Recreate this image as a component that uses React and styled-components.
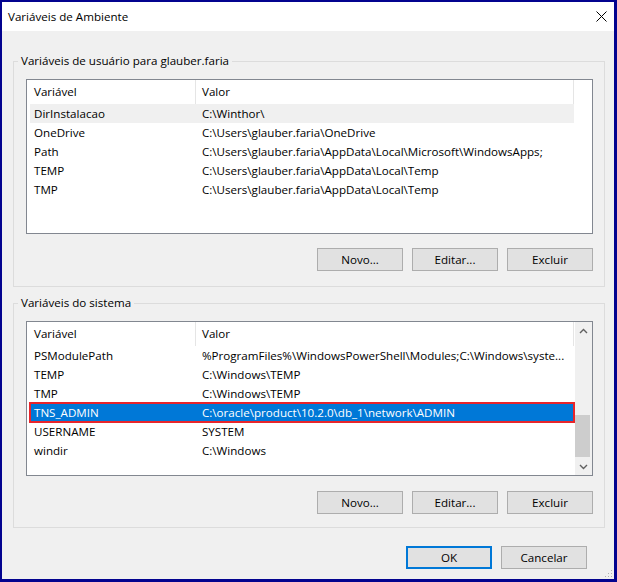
import React from 'react'
import styled, { createGlobalStyle } from 'styled-components'

const Global = createGlobalStyle`
  html, body {
    margin: 0;
    padding: 0;
    background: #f0f0f0;
  }
  * {
    box-sizing: border-box;
  }
`

const FONT = `"Segoe UI", "Open Sans", "Noto Sans", sans-serif`
const SIZE = '11.6px'

const Window = styled.div`
  position: relative;
  width: 617px;
  height: 582px;
  border-style: solid;
  border-color: #03038f;
  border-width: 2px 3px 3px 2px;
  background: #f0f0f0;
  font-family: ${FONT};
  font-size: ${SIZE};
  color: #000;
  display: flex;
  flex-direction: column;
`

const TitleBar = styled.div`
  height: 29px;
  flex: none;
  background: #fff;
  display: flex;
  align-items: center;
  justify-content: space-between;
  padding: 0 7px 0 6px;
`

const Title = styled.span`
  line-height: 16px;
`

const Body = styled.div`
  flex: 1;
  display: flex;
  flex-direction: column;
  padding: 22px 9px 0 11px;
`

const Group = styled.fieldset`
  margin: ${p => p.$first ? '0' : '8px'} 0 0 0;
  padding: 0 11px ${p => p.$pb}px 12px;
  border: 1px solid #dcdcdc;
  min-width: 0;
`

const Legend = styled.legend`
  padding: 0 3px;
  margin-left: -8px;
  line-height: 16px;
`

const List = styled.div`
  margin-top: 10px;
  height: 155px;
  border: 1px solid #828790;
  background: #fff;
  display: flex;
  overflow: hidden;
`

const ListMain = styled.div`
  flex: 1;
  min-width: 0;
`

const Header = styled.div`
  display: flex;
  height: 24px;
  width: 547px;
`

const HeadCell = styled.div`
  width: ${p => p.$w}px;
  padding-left: ${p => p.$pl}px;
  display: flex;
  align-items: center;
  border-right: 1px solid #e5e5e5;
  line-height: 16px;
`

const Row = styled.div`
  display: flex;
  height: 19px;
  width: 544px;
  margin-left: 3px;
  align-items: center;
  background: ${p => p.$state === 'active' ? '#0078d7' : p.$state === 'inactive' ? '#f0f0f0' : 'transparent'};
  color: ${p => p.$state === 'active' ? '#fff' : '#000'};
  outline: ${p => p.$mark ? '2px solid #e8252b' : 'none'};
  outline-offset: -1px;
  white-space: nowrap;
`

const Cell = styled.div`
  width: ${p => p.$w ? `${p.$w}px` : 'auto'};
  flex: ${p => p.$w ? 'none' : '1'};
  padding-left: ${p => p.$pl}px;
  overflow: hidden;
  line-height: 16px;
`

const ScrollBar = styled.div`
  width: 17px;
  flex: none;
  display: flex;
  flex-direction: column;
  background: #f0f0f0;
`

const ArrowBtn = styled.div`
  height: 17px;
  flex: none;
  display: flex;
  align-items: center;
  justify-content: center;
`

const Track = styled.div`
  flex: 1;
  display: flex;
  flex-direction: column;
`

const Thumb = styled.div`
  margin: ${p => p.$top}px 2px 0 0;
  height: ${p => p.$h}px;
  background: #cdcdcd;
`

const ButtonRow = styled.div`
  display: flex;
  justify-content: flex-end;
  gap: 9px;
  margin-top: ${p => p.$mt || 14}px;
  padding-right: ${p => p.$pr || 0}px;
`

const Button = styled.button`
  width: 86px;
  height: 23px;
  padding: 0;
  background: #e1e1e1;
  border: ${p => p.$default ? '2px solid #0078d7' : '1px solid #adadad'};
  font-family: ${FONT};
  font-size: ${SIZE};
  color: #000;
  line-height: 16px;
`

const Grip = styled.svg`
  position: absolute;
  right: 1px;
  bottom: 1px;
`

const Chevron = ({ up }) => (
  <svg width="9" height="6" viewBox="0 0 9 6">
    <path
      d={up ? 'M1 5 L4.5 1.5 L8 5' : 'M1 1 L4.5 4.5 L8 1'}
      fill="none"
      stroke="#606060"
      strokeWidth="1.4"
    />
  </svg>
)

const userVars = [
  ['DirInstalacao', 'C:\\Winthor\\', 'inactive'],
  ['OneDrive', 'C:\\Users\\glauber.faria\\OneDrive'],
  ['Path', 'C:\\Users\\glauber.faria\\AppData\\Local\\Microsoft\\WindowsApps;'],
  ['TEMP', 'C:\\Users\\glauber.faria\\AppData\\Local\\Temp'],
  ['TMP', 'C:\\Users\\glauber.faria\\AppData\\Local\\Temp'],
]

const systemVars = [
  ['PSModulePath', '%ProgramFiles%\\WindowsPowerShell\\Modules;C:\\Windows\\syste...'],
  ['TEMP', 'C:\\Windows\\TEMP'],
  ['TMP', 'C:\\Windows\\TEMP'],
  ['TNS_ADMIN', 'C:\\oracle\\product\\10.2.0\\db_1\\network\\ADMIN', 'active'],
  ['USERNAME', 'SYSTEM'],
  ['windir', 'C:\\Windows'],
]

const VarList = ({ rows, scroll }) => (
  <List>
    <ListMain>
      <Header>
        <HeadCell $w={169} $pl={7}>Variável</HeadCell>
        <HeadCell $w={378} $pl={6}>Valor</HeadCell>
      </Header>
      {rows.map(([name, value, state]) => (
        <Row key={name} $state={state} $mark={state === 'active'}>
          <Cell $w={166} $pl={4}>{name}</Cell>
          <Cell $pl={6}>{value}</Cell>
        </Row>
      ))}
    </ListMain>
    {scroll && (
      <ScrollBar>
        <ArrowBtn><Chevron up /></ArrowBtn>
        <Track>
          <Thumb $top={76} $h={42} />
        </Track>
        <ArrowBtn><Chevron /></ArrowBtn>
      </ScrollBar>
    )}
  </List>
)

const Actions = ({ mt }) => (
  <ButtonRow $mt={mt}>
    <Button>Novo...</Button>
    <Button>Editar...</Button>
    <Button>Excluir</Button>
  </ButtonRow>
)

export default function App() {
  return (
    <>
      <Global />
      <Window>
        <TitleBar>
          <Title>Variáveis de Ambiente</Title>
          <svg width="11" height="11" viewBox="0 0 11 11">
            <path d="M0.5 0.5 L10.5 10.5 M10.5 0.5 L0.5 10.5" stroke="#000" strokeWidth="1" fill="none" />
          </svg>
        </TitleBar>
        <Body>
          <Group $first $pb={15}>
            <Legend>Variáveis de usuário para glauber.faria</Legend>
            <VarList rows={userVars} />
            <Actions />
          </Group>
          <Group $pb={13}>
            <Legend>Variáveis do sistema</Legend>
            <VarList rows={systemVars} scroll />
            <Actions mt={15} />
          </Group>
          <ButtonRow $mt={18} $pr={18}>
            <Button $default>OK</Button>
            <Button>Cancelar</Button>
          </ButtonRow>
        </Body>
        <Grip width="8" height="8" viewBox="0 0 8 8">
          <rect x="6" y="0" width="1" height="1" fill="#b0b0b0" />
          <rect x="3" y="3" width="1" height="1" fill="#b0b0b0" />
          <rect x="6" y="3" width="1" height="1" fill="#b0b0b0" />
          <rect x="0" y="6" width="1" height="1" fill="#b0b0b0" />
          <rect x="3" y="6" width="1" height="1" fill="#b0b0b0" />
          <rect x="6" y="6" width="1" height="1" fill="#b0b0b0" />
        </Grip>
      </Window>
    </>
  )
}
